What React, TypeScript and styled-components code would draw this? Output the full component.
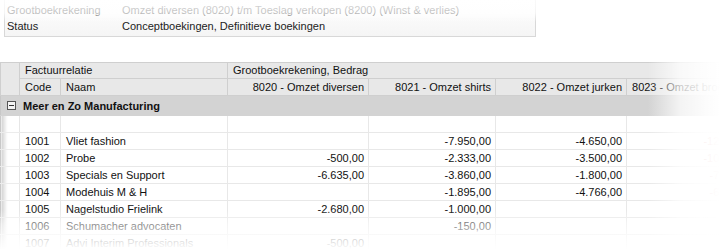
import React from "react";
import styled, { createGlobalStyle } from "styled-components";

const Global = createGlobalStyle`
  html, body { margin: 0; padding: 0; background: #fff; }
  body { font-family: "Liberation Sans", Arial, sans-serif; font-size: 11px; color: #1a1a1a; }
`;

const Page = styled.div`
  position: relative;
  width: 720px;
  height: 250px;
  overflow: hidden;
  background: #fff;
`;

const FilterPanel = styled.div`
  margin-left: 4px;
  width: 532px;
  height: 37px;
  border: 1px solid #d8d8d8;
  border-top: none;
  background: linear-gradient(to bottom, #ffffff, #f5f5f5);
  display: grid;
  grid-template-columns: 115px 1fr;
  grid-auto-rows: 16px;
  align-content: end;
  padding-left: 2px;
  padding-bottom: 2px;
  box-sizing: border-box;
`;

const FilterCell = styled.div`
  line-height: 16px;
  white-space: nowrap;
  color: #222;
`;

const TableWrap = styled.div`
  margin-top: 25px;
  width: 760px;
`;

const Grid = styled.table`
  border-collapse: collapse;
  table-layout: fixed;
  width: 760px;
  border-left: 1px solid #c8c8c8;
`;

const Row = styled.tr<{ $h: number }>`
  height: ${(p) => p.$h}px;
`;

const HeadCell = styled.th<{ $align?: string }>`
  background: #e8e8e8;
  border: 1px solid #cfcfcf;
  font-weight: normal;
  color: #111;
  text-align: ${(p) => p.$align || "left"};
  padding: 0 4px 0 5px;
  line-height: 15px;
  white-space: nowrap;
  overflow: hidden;
`;

const GroupCell = styled.td`
  background: #d3d3d3;
  padding: 0 0 0 6px;
  font-weight: bold;
  color: #111;
  white-space: nowrap;
  border-bottom: 1px solid #d3d3d3;
`;

const GroupLabel = styled.div`
  display: flex;
  align-items: center;
  gap: 7px;
`;

const Toggle = styled.span`
  width: 7px;
  height: 7px;
  border: 1px solid #555;
  background: #f4f4f4;
  position: relative;
  display: inline-block;
  &::after {
    content: "";
    position: absolute;
    left: 1px;
    right: 1px;
    top: 3px;
    height: 1px;
    background: #333;
  }
`;

const GutterCell = styled.td`
  background: linear-gradient(to right, #d2d2d2, #ffffff 6px);
  border-bottom: 1px solid #ececec;
  border-right: 1px solid #e6e6e6;
`;

const Cell = styled.td<{ $num?: boolean; $muted?: boolean }>`
  line-height: 16px;
  padding: 0 4px 0 5px;
  text-align: ${(p) => (p.$num ? "right" : "left")};
  border: 1px solid #e8e8e8;
  border-top: none;
  border-left: none;
  white-space: nowrap;
  overflow: hidden;
  color: ${(p) => (p.$muted ? "#c66" : "#111")};
`;

const Fade = styled.div<{ $dir: "top" | "right" | "bottom" }>`
  position: absolute;
  pointer-events: none;
  ${(p) =>
    p.$dir === "top"
      ? `left: 0; right: 0; top: 0; height: 22px;
         background: linear-gradient(to bottom, rgba(255,255,255,0.85), rgba(255,255,255,0.72) 13px, rgba(255,255,255,0));`
      : p.$dir === "right"
      ? `top: 0; bottom: 0; right: 0; width: 72px;
         background: linear-gradient(to right, rgba(255,255,255,0), rgba(255,255,255,0.75) 45%, rgba(255,255,255,0.93) 80%, #fff);`
      : `left: 0; right: 0; bottom: 0; height: 40px;
         background: linear-gradient(to bottom, rgba(255,255,255,0), rgba(255,255,255,0.5) 14px, rgba(255,255,255,0.85) 31px, #fff 40px);`}
`;

type DataRow = { code: string; name: string; v: string[] };

const rows: DataRow[] = [
  { code: "1001", name: "Vliet fashion", v: ["", "-7.950,00", "-4.650,00", "-12.100,00"] },
  { code: "1002", name: "Probe", v: ["-500,00", "-2.333,00", "-3.500,00", "-10.300,00"] },
  { code: "1003", name: "Specials en Support", v: ["-6.635,00", "-3.860,00", "-1.800,00", "-7.200,00"] },
  { code: "1004", name: "Modehuis M & H", v: ["", "-1.895,00", "-4.766,00", "-6.400,00"] },
  { code: "1005", name: "Nagelstudio Frielink", v: ["-2.680,00", "-1.000,00", "", ""] },
  { code: "1006", name: "Schumacher advocaten", v: ["", "-150,00", "", ""] },
  { code: "1007", name: "Advi Interim Professionals", v: ["-500,00", "", "", ""] },
];

export default function App() {
  return (
    <Page>
      <Global />
      <FilterPanel>
        <FilterCell>Grootboekrekening</FilterCell>
        <FilterCell>Omzet diversen (8020) t/m Toeslag verkopen (8200) (Winst &amp; verlies)</FilterCell>
        <FilterCell>Status</FilterCell>
        <FilterCell>Conceptboekingen, Definitieve boekingen</FilterCell>
      </FilterPanel>
      <TableWrap>
        <Grid>
          <colgroup>
            <col style={{ width: 19 }} />
            <col style={{ width: 41 }} />
            <col style={{ width: 167 }} />
            <col style={{ width: 141 }} />
            <col style={{ width: 127 }} />
            <col style={{ width: 131 }} />
            <col style={{ width: 134 }} />
          </colgroup>
          <thead>
            <Row $h={16}>
              <HeadCell rowSpan={2} />
              <HeadCell colSpan={2}>Factuurrelatie</HeadCell>
              <HeadCell colSpan={4}>Grootboekrekening, Bedrag</HeadCell>
            </Row>
            <Row $h={17}>
              <HeadCell>Code</HeadCell>
              <HeadCell>Naam</HeadCell>
              <HeadCell $align="right">8020 - Omzet diversen</HeadCell>
              <HeadCell $align="right">8021 - Omzet shirts</HeadCell>
              <HeadCell $align="right">8022 - Omzet jurken</HeadCell>
              <HeadCell $align="left">8023 - Omzet broeken</HeadCell>
            </Row>
          </thead>
          <tbody>
            <Row $h={20}>
              <GroupCell colSpan={7}>
                <GroupLabel>
                  <Toggle />
                  Meer en Zo Manufacturing
                </GroupLabel>
              </GroupCell>
            </Row>
            <Row $h={17}>
              <GutterCell />
              <Cell />
              <Cell />
              <Cell />
              <Cell />
              <Cell />
              <Cell />
            </Row>
            {rows.map((r) => (
              <Row $h={17} key={r.code}>
                <GutterCell />
                <Cell>{r.code}</Cell>
                <Cell>{r.name}</Cell>
                <Cell $num>{r.v[0]}</Cell>
                <Cell $num>{r.v[1]}</Cell>
                <Cell $num>{r.v[2]}</Cell>
                <Cell $num $muted>{r.v[3]}</Cell>
              </Row>
            ))}
          </tbody>
        </Grid>
      </TableWrap>
      <Fade $dir="top" />
      <Fade $dir="right" />
      <Fade $dir="bottom" />
    </Page>
  );
}
